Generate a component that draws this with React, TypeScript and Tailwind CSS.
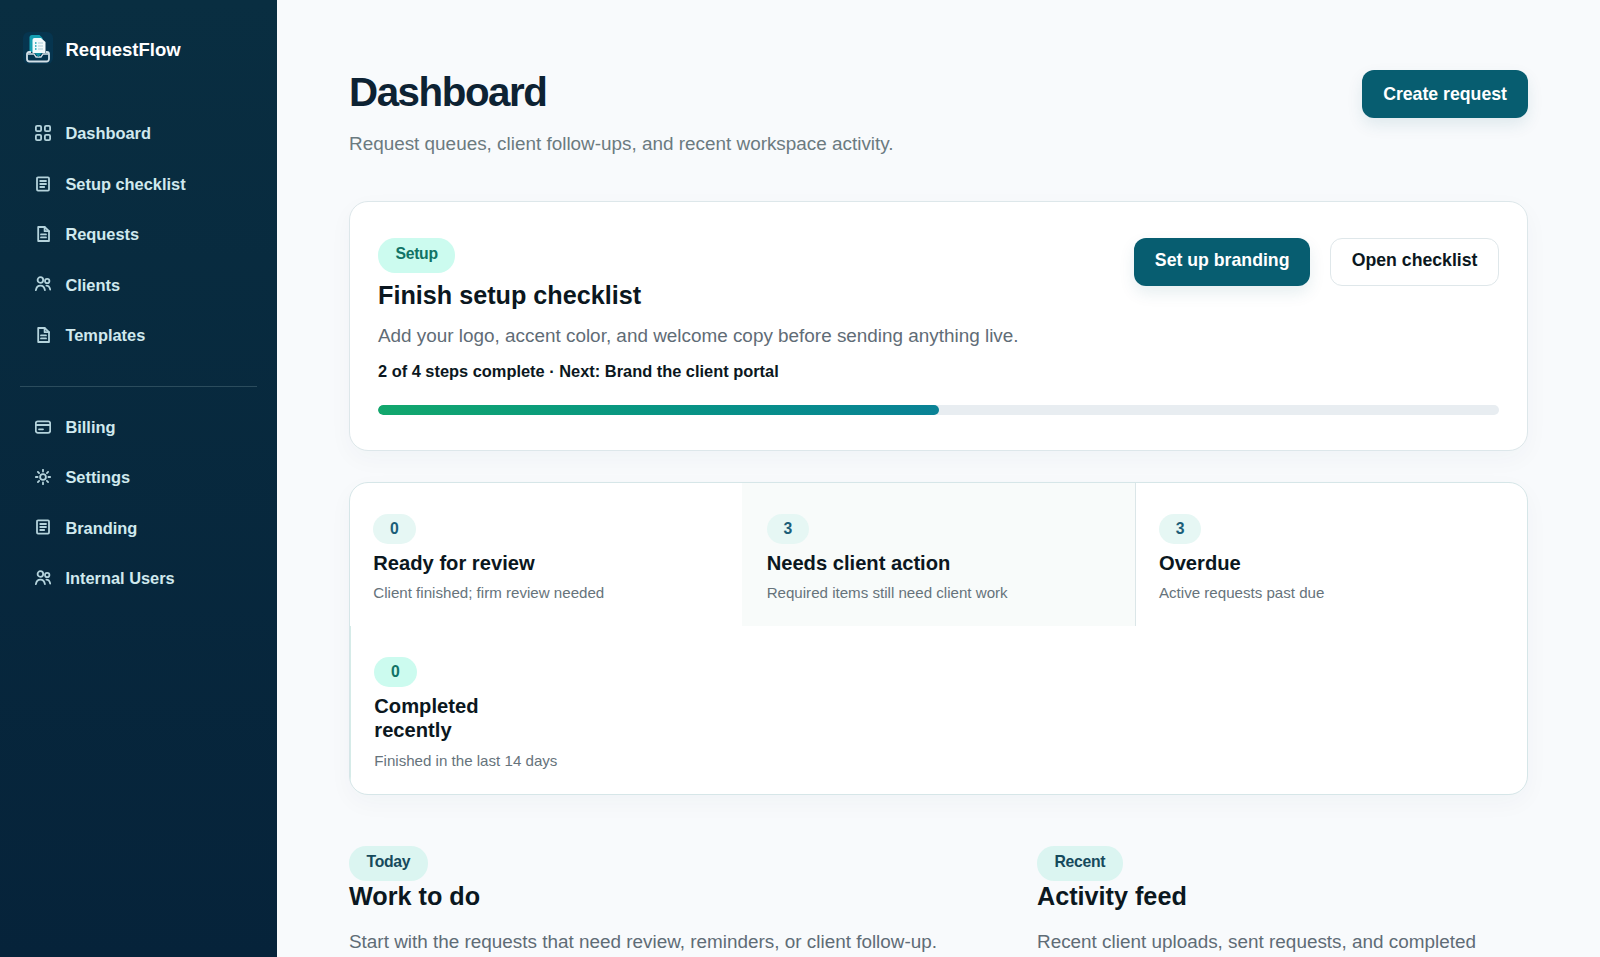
import type { ReactNode } from "react";

const icons: Record<string, ReactNode> = {
  grid: (
    <>
      <rect x=".9" y=".9" width="5.2" height="5.2" rx="1.2" />
      <rect x="9.9" y=".9" width="5.2" height="5.2" rx="1.2" />
      <rect x=".9" y="9.9" width="5.2" height="5.2" rx="1.2" />
      <rect x="9.9" y="9.9" width="5.2" height="5.2" rx="1.2" />
    </>
  ),
  list: (
    <>
      <rect x="2" y="1.4" width="12" height="13.2" rx="1" />
      <path d="M5.2 5h5.8M5.2 8h5.8M5.2 11h4" />
    </>
  ),
  file: (
    <>
      <path d="M3.2 1h6.4L14 5.2V15H3.2z" />
      <path d="M9.6 1v4.2H14M6 8.4h5M6 11.4h5" />
    </>
  ),
  users: (
    <>
      <circle cx="5.4" cy="4" r="2.8" />
      <path d="M.9 14.2c.4-2.800 2.200-4.600 4.500-4.600s4.100 1.800 4.500 4.600" />
      <circle cx="12.2" cy="5" r="2.2" />
      <path d="M11.400 9.600c2 0 3.300 1.600 3.800 4" />
    </>
  ),
  card: (
    <>
      <rect x=".8" y="2.4" width="14.4" height="11.4" rx="2" />
      <path d="M1 6h14M4 10.300h4" />
    </>
  ),
  gear: (
    <>
      <circle cx="8" cy="8" r="2.9" />
      <path d="M8 .8v1.800M8 13.400v1.800M.8 8h1.800M13.400 8h1.800M2.900 2.900l1.200 1.200M11.900 11.900l1.200 1.200M2.900 13.100l1.200-1.200M11.900 4.100l1.200-1.200" />
    </>
  ),
};

const mainNav = [
  { label: "Dashboard", icon: "grid" },
  { label: "Setup checklist", icon: "list" },
  { label: "Requests", icon: "file" },
  { label: "Clients", icon: "users" },
  { label: "Templates", icon: "file" },
];

const adminNav = [
  { label: "Billing", icon: "card" },
  { label: "Settings", icon: "gear" },
  { label: "Branding", icon: "list" },
  { label: "Internal Users", icon: "users" },
];

const stats = [
  { count: 0, title: "Ready for review", text: "Client finished; firm review needed", cell: "", pill: "bg-[#e6f7f4] text-[#1b5e78]" },
  { count: 3, title: "Needs client action", text: "Required items still need client work", cell: "border-l border-[#f8fbfa] bg-[#f8fbfa]", pill: "bg-[#e6f7f4] text-[#1b5e78]" },
  { count: 3, title: "Overdue", text: "Active requests past due", cell: "border-l border-[#dbe6e8]", pill: "bg-[#e6f7f4] text-[#1b5e78]" },
  { count: 0, title: "Completed recently", text: "Finished in the last 14 days", cell: "border-l border-[#d5ebe8]", pill: "bg-[#ccfbef] text-[#117366]" },
];

function NavList({ items }: { items: { label: string; icon: string }[] }) {
  return (
    <nav>
      {items.map((item) => (
        <a key={item.label} className="flex h-[50.4px] items-center gap-[14.4px] pl-[15px] text-[16.4px] font-bold text-[#d0e9ee]">
          <svg viewBox="0 0 16 16" className="size-4 text-[#b4d3dc]" fill="none" stroke="currentColor" strokeWidth="1.8" strokeLinecap="round" strokeLinejoin="round">
            {icons[item.icon]}
          </svg>
          <span className="pt-px">{item.label}</span>
        </a>
      ))}
    </nav>
  );
}

function Logo() {
  return (
    <svg viewBox="0 0 30 32" className="h-8 w-[30px]" fill="none">
      <rect x="0" y="0" width="30" height="32" rx="6" fill="#06354f" />
      <path d="M6.500 20V5.500A2.500 2.500 0 0 1 9 3h7.500l3 3v14z" fill="#159fb2" />
      <path d="M9.500 21V8a2 2 0 0 1 2-2H18l4.500 4v11z" fill="#f2fafc" />
      <path d="M12 11h1.500M12 14h1.500M12 17h1.500" stroke="#16a3b5" strokeWidth="1.3" />
      <path d="M15 11h5M15 14h5M15 17h5" stroke="#a9cbd8" strokeWidth="1.2" />
      <path d="M8 20H6a2 2 0 0 0-2 2v5a2.500 2.500 0 0 0 2.500 2.500h17A2.500 2.500 0 0 0 26 27v-5a2 2 0 0 0-2-2h-1" stroke="#d3e0e8" strokeWidth="1.8" />
      <path d="M5 22h6l2 3h5l2-3h5" stroke="#d3e0e8" strokeWidth="1.3" />
      <path d="M11.500 21h7.500l-3.700 4z" fill="#128fa3" />
    </svg>
  );
}

function Pill({ className, children }: { className: string; children: ReactNode }) {
  return (
    <span className={`block w-fit rounded-[17px] px-[17.5px] pb-[3px] text-[15.75px] leading-8 font-bold tracking-[-0.3px] ${className}`}>
      {children}
    </span>
  );
}

const primaryBtn =
  "h-[47.7px] rounded-xl bg-[#075d70] text-[17.7px] font-bold text-white shadow-[0_7px_16px_rgba(7,93,112,0.1)]";

export default function App() {
  return (
    <div className="flex h-[957px] w-full overflow-hidden bg-[#f8fafc] font-['Liberation_Sans',Arial,sans-serif] text-[#0b1720]">
      <aside className="w-[277px] shrink-0 bg-linear-to-b from-[#092e41] to-[#06233a] px-5">
        <div className="mt-[32px] mb-[44px] flex h-8 items-center gap-[13px] pl-[2.5px] text-[18.5px] font-bold text-white">
          <Logo />
          <span className="pt-1">RequestFlow</span>
        </div>
        <NavList items={mainNav} />
        <hr className="mt-[26.5px] mb-[14px] border-t-[1.5px] border-[#2b4c5d]" />
        <NavList items={adminNav} />
      </aside>

      <main className="min-w-0 flex-1 px-[72px] pt-[70px]">
        <header className="flex items-start justify-between">
          <div>
            <h1 className="pt-[3px] text-[40.3px] leading-10 font-bold tracking-[-1.45px] text-[#0d2233]">Dashboard</h1>
            <p className="mt-[15.5px] text-[18.9px] leading-[30px] text-[#6b7a80]">
              Request queues, client follow-ups, and recent workspace activity.
            </p>
          </div>
          <button className={`${primaryBtn} px-[21px]`}>Create request</button>
        </header>

        <section className="mt-[42.5px] rounded-[19px] border border-[#dde7ea] bg-white px-7 pt-9 pb-[35px] shadow-[0_8px_24px_rgba(15,60,75,0.035)]">
          <div className="flex items-start justify-between">
            <div>
              <Pill className="bg-[#ccfbef] text-[#117366]">Setup</Pill>
              <h2 className="mt-[7px] text-[25.2px] leading-[30px] font-bold">Finish setup checklist</h2>
              <p className="mt-[11px] text-[18.9px] leading-[30px] text-[#5f6c76]">
                Add your logo, accent color, and welcome copy before sending anything live.
              </p>
              <p className="mt-2 text-[16.4px] leading-6 font-bold">
                2 of 4 steps complete · Next: Brand the client portal
              </p>
            </div>
            <div className="flex gap-5">
              <button className={`${primaryBtn} px-[20.7px] pb-[3px]`}>Set up branding</button>
              <button className="h-[47.7px] rounded-xl border border-[#dfe7ea] bg-white px-[20.5px] pb-[3px] text-[17.7px] font-bold">
                Open checklist
              </button>
            </div>
          </div>
          <div className="mt-[22px] h-[10px] overflow-hidden rounded-full bg-[#e8edf1]">
            <div className="h-full w-1/2 rounded-full bg-linear-to-r from-[#12a76c] to-[#0a8296]" />
          </div>
        </section>

        <section className="mt-[31px] grid grid-cols-3 overflow-hidden rounded-[19px] border border-[#d6e6e8] bg-white shadow-[0_8px_24px_rgba(15,60,75,0.035)]">
          {stats.map((s) => (
            <div key={s.title} className={`px-[23.3px] pt-[30.5px] pb-[22.4px] ${s.cell}`}>
              <span className={`block w-fit rounded-full px-[16.8px] text-[15.75px] leading-[30.5px] font-bold ${s.pill}`}>
                {s.count}
              </span>
              <h3 className="mt-[6.8px] max-w-[185px] text-[20.16px] leading-6 font-bold">{s.title}</h3>
              <p className="mt-[7.3px] text-[15.12px] leading-[22px] text-[#66737b]">{s.text}</p>
            </div>
          ))}
        </section>

        <div className="mt-[51px] grid grid-cols-[1fr_491px]">
          <section>
            <Pill className="bg-[#dbf5f1] text-[#164a5c]">Today</Pill>
            <h2 className="text-[25.2px] leading-[30px] font-bold">Work to do</h2>
            <p className="mt-[15.8px] text-[18.9px] leading-[30px] text-[#5f6c76]">
              Start with the requests that need review, reminders, or client follow-up.
            </p>
          </section>
          <section>
            <Pill className="bg-[#dbf5f1] text-[#164a5c]">Recent</Pill>
            <h2 className="text-[25.2px] leading-[30px] font-bold">Activity feed</h2>
            <p className="mt-[15.8px] text-[18.9px] leading-[30px] text-[#5f6c76]">
              Recent client uploads, sent requests, and completed
            </p>
          </section>
        </div>
      </main>
    </div>
  );
}
